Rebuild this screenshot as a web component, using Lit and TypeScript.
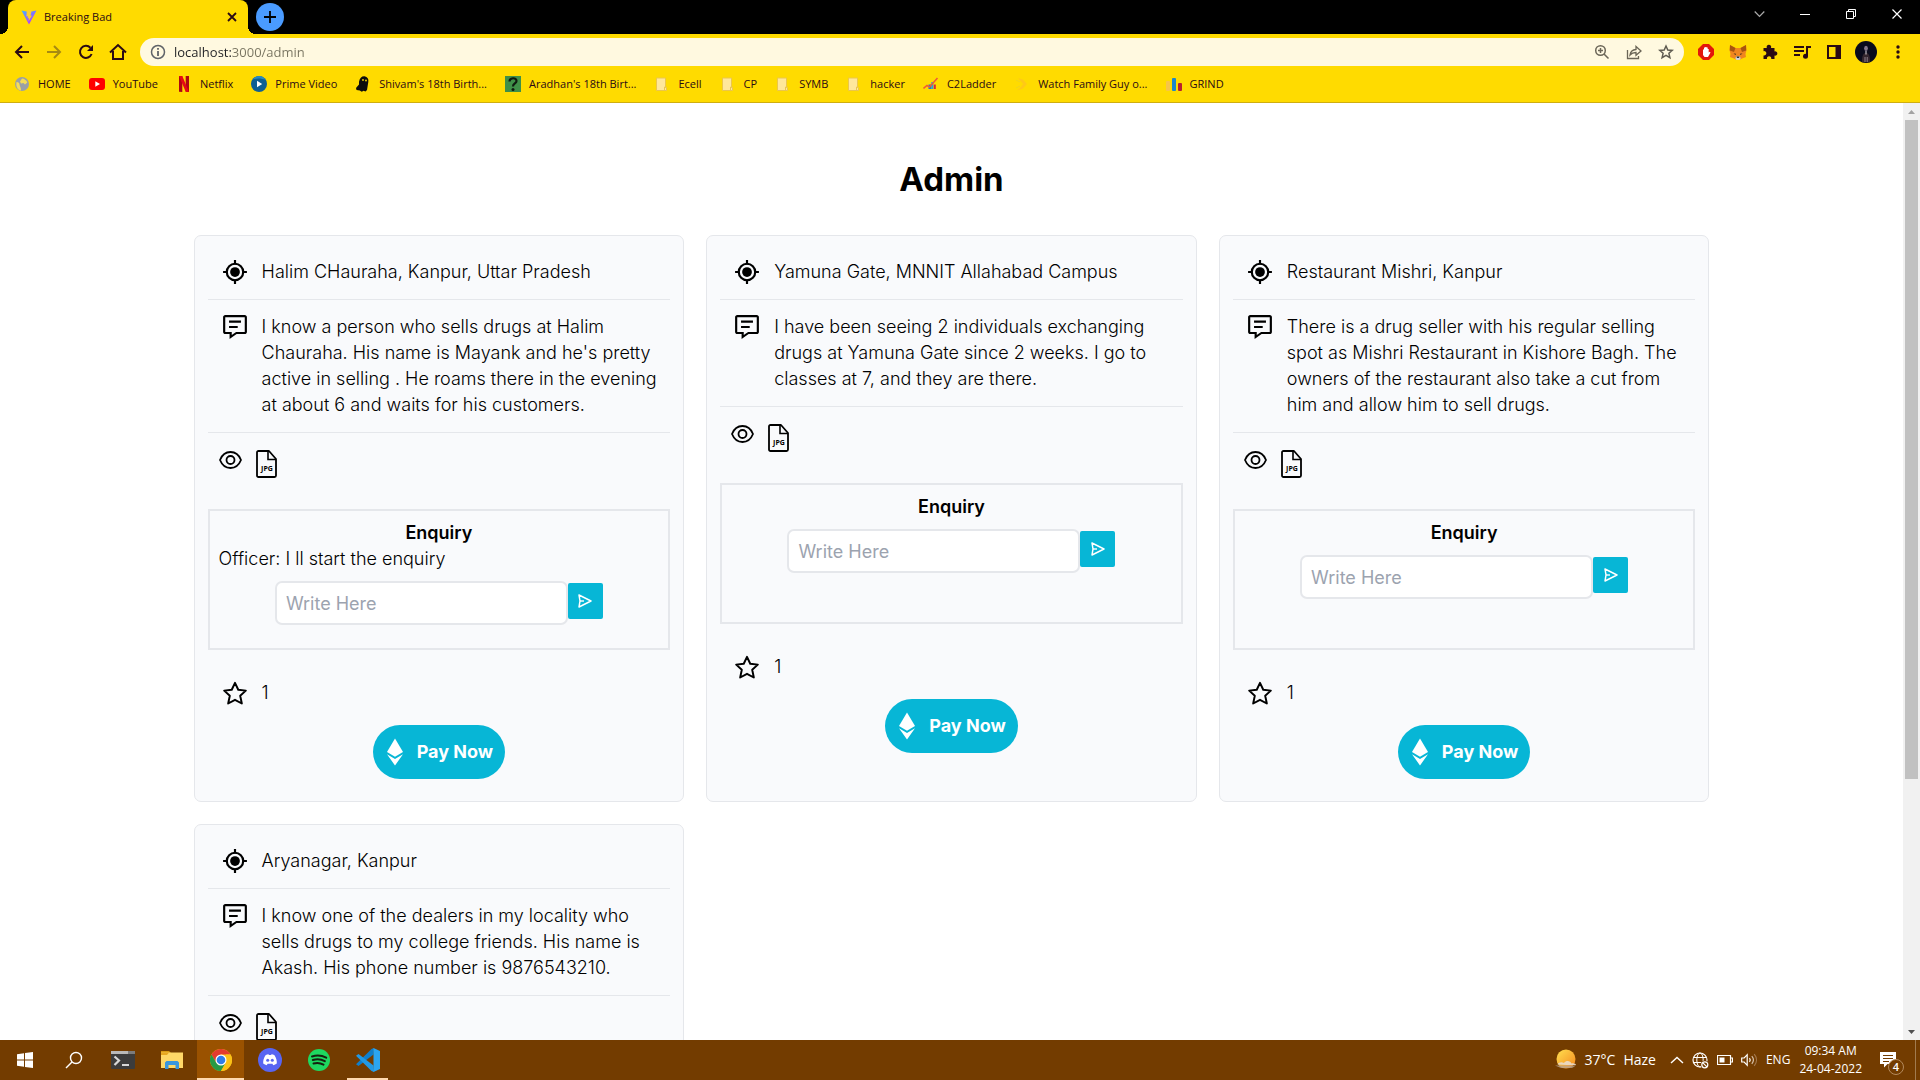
import { LitElement, html, css } from "lit";
import type { TemplateResult } from "lit";
import { customElement, property } from "lit/decorators.js";

interface Report {
  place: string;
  text: string;
  messages: string[];
  stars: number;
}

const REPORTS: Report[] = [
  {
    place: "Halim CHauraha, Kanpur, Uttar Pradesh",
    text: "I know a person who sells drugs at Halim Chauraha. His name is Mayank and he's pretty active in selling . He roams there in the evening at about 6 and waits for his customers.",
    messages: ["Officer: I ll start the enquiry"],
    stars: 1,
  },
  {
    place: "Yamuna Gate, MNNIT Allahabad Campus",
    text: "I have been seeing 2 individuals exchanging drugs at Yamuna Gate since 2 weeks. I go to classes at 7, and they are there.",
    messages: [],
    stars: 1,
  },
  {
    place: "Restaurant Mishri, Kanpur",
    text: "There is a drug seller with his regular selling spot as Mishri Restaurant in Kishore Bagh. The owners of the restaurant also take a cut from him and allow him to sell drugs.",
    messages: [],
    stars: 1,
  },
  {
    place: "Aryanagar, Kanpur",
    text: "I know one of the dealers in my locality who sells drugs to my college friends. His name is Akash. His phone number is 9876543210.",
    messages: [],
    stars: 1,
  },
];

/* ---------- report card icons ---------- */

const locationIcon = html`<svg width="26" height="26" viewBox="0 0 24 24" aria-hidden="true">
  <circle cx="12" cy="12" r="7.6" fill="none" stroke="#000" stroke-width="2" />
  <circle cx="12" cy="12" r="4.5" fill="#000" />
  <path d="M12 1v4M12 19v4M1 12h4M19 12h4" stroke="#000" stroke-width="2" />
</svg>`;

const commentIcon = html`<svg width="26" height="26" viewBox="0 0 24 24" aria-hidden="true">
  <path d="M21 1H3C1.900 1 1 1.900 1 3v13.500c0 1.100.9 2 2 2h4V23l6.500-4.500H21c1.100 0 2-.9 2-2V3c0-1.100-.9-2-2-2zm0 15.500h-8L9 19.300V16.500H3V3h18v13.500z" fill="#000" />
  <path d="M6.500 7h11M6.500 12h8" stroke="#000" stroke-width="2" />
</svg>`;

const starIcon = html`<svg width="26" height="26" viewBox="0 0 24 24" aria-hidden="true">
  <path d="M12 2.600l3 6.400 7 .8-5.200 4.700 1.500 7.200-6.300-3.400-6.300 3.400 1.500-7.200L2 9.800 9 9z" fill="none" stroke="#000" stroke-width="1.800" stroke-linejoin="round" />
</svg>`;

const eyeIcon = html`<svg width="23" height="20" viewBox="0 0 23 20" aria-hidden="true">
  <path d="M1 10C3 5 7 2 11.500 2S20 5 22 10c-2 5-6 8-10.500 8S3 15 1 10z" fill="none" stroke="#000" stroke-width="1.800" stroke-linejoin="round" />
  <circle cx="11.500" cy="10" r="4" fill="none" stroke="#000" stroke-width="1.800" />
</svg>`;

const jpgIcon = html`<svg width="21" height="28" viewBox="0 0 21 28" aria-hidden="true">
  <path d="M2.500 1H13l7 8v16.500c0 .9-.6 1.500-1.500 1.500h-16C1.600 27 1 26.400 1 25.500v-23C1 1.600 1.600 1 2.500 1z" fill="none" stroke="#000" stroke-width="1.800" stroke-linejoin="round" />
  <path d="M12 1v8.500h8" fill="none" stroke="#000" stroke-width="1.600" />
  <text x="11" y="21" text-anchor="middle" class="jpg-text">JPG</text>
</svg>`;

const sendIcon = html`<svg width="14" height="14" viewBox="0 0 14 14" aria-hidden="true">
  <path d="M1 1l12 6L1 13l1-6z" fill="none" stroke="#fff" stroke-width="1.500" stroke-linejoin="round" />
  <path d="M2 7h4" stroke="#fff" stroke-width="1.400" />
</svg>`;

const etherIcon = html`<svg width="18" height="28" viewBox="0 0 18 28" aria-hidden="true">
  <path d="M9 0.500l8 13.500-8 4.800L1 14z" fill="#fff" />
  <path d="M1 16.200l8 4.800 8-4.800L9 27.500z" fill="#fff" />
</svg>`;

/* ---------- browser icons ---------- */

const INK = "#2a0a14";

const backIcon = html`<svg width="16" height="16" viewBox="0 0 16 16"><path d="M15 8H2.500M8 2L2 8l6 6" fill="none" stroke="${INK}" stroke-width="2" /></svg>`;
const forwardIcon = html`<svg width="16" height="16" viewBox="0 0 16 16"><path d="M1 8h12.500M8 2l6 6-6 6" fill="none" stroke="#a68a12" stroke-width="2" /></svg>`;
const reloadIcon = html`<svg width="16" height="16" viewBox="0 0 16 16"><path d="M13.600 10A6 6 0 1 1 12.400 3.800" fill="none" stroke="${INK}" stroke-width="2" /><path d="M15 1v6H9z" fill="${INK}" /></svg>`;
const homeIcon = html`<svg width="18" height="18" viewBox="0 0 18 18"><path d="M1 9.500L9 2l8 7.500M4 8v8h10V8" fill="none" stroke="${INK}" stroke-width="2" /></svg>`;
const infoIcon = html`<svg width="16" height="16" viewBox="0 0 16 16"><circle cx="8" cy="8" r="6.500" fill="none" stroke="#5f6368" stroke-width="1.500" /><path d="M8 7v5M8 4v1.800" stroke="#5f6368" stroke-width="1.800" /></svg>`;
const zoomIcon = html`<svg width="16" height="16" viewBox="0 0 16 16"><circle cx="6.500" cy="6.500" r="4.800" fill="none" stroke="#6b6657" stroke-width="1.500" /><path d="M10 10l4.500 4.500M4 6.500h5M6.500 4v5" stroke="#6b6657" stroke-width="1.500" /></svg>`;
const shareIcon = html`<svg width="16" height="16" viewBox="0 0 16 16"><path d="M1.500 6v8.500h11V12" fill="none" stroke="#6b6657" stroke-width="1.300" /><path d="M4 11c.5-3.500 2.500-5.300 6-5.500V2.500l5 4.500-5 4.300V8.500c-2.500 0-4.500.8-6 2.500z" fill="none" stroke="#6b6657" stroke-width="1.300" /></svg>`;
const bookmarkIcon = html`<svg width="16" height="16" viewBox="0 0 16 16"><path d="M8 2l1.800 4 4.400.4-3.300 2.900 1 4.300L8 11.300l-3.900 2.300 1-4.300L1.800 6.400 6.200 6z" fill="none" stroke="#5f5b50" stroke-width="1.500" /></svg>`;

const blockIcon = html`<svg width="16" height="16" viewBox="0 0 16 16"><path d="M5 0h6l5 5v6l-5 5H5l-5-5V5z" fill="#e3170a" /><path d="M5 9V5.500h1V3.500h1.200V3h1.300v.5h1.200V5h1v3.500l1-.8.8.8L10 13H6.500L5 11z" fill="#fff" /></svg>`;
const foxIcon = html`<svg width="18" height="16" viewBox="0 0 18 16"><path d="M1 1l5.500 3h5L17 1l.5 5-1 4 .5 3-4 1.500-2 1H7l-2-1L1 13l.5-3-1-4z" fill="#f0861e" /><path d="M1 1l5.500 3L5 8 .8 6.500zM17 1l-5.500 3L13 8l4.200-1.500z" fill="#a8550f" /><path d="M4.500 9.500l2.500.3-.5 1.200zM13.500 9.500l-2.500.3.5 1.200z" fill="#33251a" /><path d="M7 12.500h4l.6 2L10.500 16h-3l-1.100-1.500z" fill="#cfd2d6" /><path d="M7.500 12.500h3L10 14H8z" fill="#24313b" /></svg>`;
const puzzleIcon = html`<svg width="16" height="16" viewBox="0 0 16 16"><path d="M1.500 4h3.300a2.300 2.300 0 1 1 4.200 0H12.500v3.400a2.200 2.200 0 1 1 0 4.200V15H9.200a2.200 2.200 0 1 0-4.200 0H1.500v-3.600a2.200 2.200 0 1 0 0-4.200z" fill="${INK}" /></svg>`;
const queueIcon = html`<svg width="17" height="14" viewBox="0 0 17 14"><path d="M0 2h10M0 6h10M0 10h6" stroke="${INK}" stroke-width="1.800" /><path d="M13 11V2h4" fill="none" stroke="${INK}" stroke-width="2" /><circle cx="11.500" cy="11.300" r="2.500" fill="${INK}" /></svg>`;
const panelIcon = html`<svg width="14" height="14" viewBox="0 0 14 14"><path d="M0 0h14v14H0zM2 2v10h6.500V2z" fill="${INK}" fill-rule="evenodd" /></svg>`;
const avatarIcon = html`<svg width="22" height="22" viewBox="0 0 22 22"><circle cx="11" cy="11" r="11" fill="#090b1c" /><path d="M7 21.200c-.2-4 .3-7.500 2.300-9h3.400c2 1.500 2.500 5 2.300 9z" fill="#33262e" /><path d="M9.500 16h1v5h-1zM11.700 16h1v5h-1z" fill="#8d7f88" /><ellipse cx="11" cy="7.300" rx="1.900" ry="2.600" fill="#85788c" /><path d="M10.500 10h1v3.500h-1z" fill="#e4dde2" /></svg>`;
const dotsIcon = html`<svg width="4" height="14" viewBox="0 0 4 14"><circle cx="2" cy="2" r="1.700" fill="${INK}" /><circle cx="2" cy="7" r="1.700" fill="${INK}" /><circle cx="2" cy="12" r="1.700" fill="${INK}" /></svg>`;

const viteIcon = html`<svg width="16" height="16" viewBox="0 0 16 16"><defs><linearGradient id="v" x1="0" y1="0" x2=".6" y2="1"><stop offset="0" stop-color="#41b8ff" /><stop offset="1" stop-color="#bd34fe" /></linearGradient></defs><path d="M.5 1.500L8 15.500l7.500-14L8 3z" fill="url(#v)" /><path d="M10.800.5L5.800 1.500l-.4 6 1.700-.3-.5 2.300 1.400-.4-.6 3.400L11 6.500l-1.500.3z" fill="#ffcf2a" /></svg>`;

/* ---------- bookmarks ---------- */

const folderIcon = html`<svg width="16" height="16" viewBox="0 0 16 16"><path d="M2.500 2h9v9.500h1v3h-10z" fill="#ffe79b" stroke="#ebc64c" /><path d="M10.500 14v-3h2" fill="none" stroke="#ebc64c" /></svg>`;

interface Bookmark {
  label: string;
  icon: TemplateResult;
}

const BOOKMARKS: Bookmark[] = [
  { label: "HOME", icon: html`<svg width="16" height="16" viewBox="0 0 16 16"><circle cx="8" cy="8" r="7" fill="#9aa0a6" /><path d="M2.500 6c2 .3 3 1 3 2.500S7 11 7 14.500C4 14 1.600 11 2.500 6zM8 2.500c2 .2 4.500 1.500 5.300 4L11 8.500 9.500 7 7 7.500 6 5.500z" fill="#f4dc58" /></svg>` },
  { label: "YouTube", icon: html`<svg width="16" height="16" viewBox="0 0 16 16"><rect y="2" width="16" height="12" rx="3" fill="#f00" /><path d="M6.300 5.300v5.400L11 8z" fill="#fff" /></svg>` },
  { label: "Netflix", icon: html`<svg width="16" height="16" viewBox="0 0 16 16"><path d="M3 0h3.300v16L3 15.700zM9.700 0H13v16l-3.300-.3z" fill="#b1060f" /><path d="M3 0h3.300L13 16 9.700 15.700z" fill="#e50914" /></svg>` },
  { label: "Prime Video", icon: html`<svg width="16" height="16" viewBox="0 0 16 16"><circle cx="8" cy="8" r="8" fill="#0f5f93" /><path d="M1.500 3.500A8 8 0 0 1 15 4C10 2 6 2 1.500 3.500z" fill="#2a8cc0" /><path d="M6 4.800v6.400L11.200 8z" fill="#fff" /></svg>` },
  { label: "Shivam's 18th Birth...", icon: html`<svg width="16" height="16" viewBox="0 0 16 16"><path d="M4 6C4.500 2 7 0 9.500.3 12.500.7 13.800 3 13.300 6L12 14l-1.500 1.500-2-.7-1.700.9-2-1.200L1.500 14 1 12l3-3.500z" fill="#0c0c0c" /><circle cx="8" cy="4" r=".9" fill="#ffdb00" /><circle cx="11" cy="4.500" r=".9" fill="#ffdb00" /></svg>` },
  { label: "Aradhan's 18th Birt...", icon: html`<svg width="16" height="16" viewBox="0 0 16 16"><rect width="16" height="16" fill="#3f8f48" /><path d="M4.500 5.500C4.500 1.500 11.500 1 11.500 5c0 2.500-3.500 2.500-3.500 5.500" fill="none" stroke="#0f1a10" stroke-width="2.200" /><circle cx="8" cy="13.500" r="1.500" fill="#0f1a10" /></svg>` },
  { label: "Ecell", icon: folderIcon },
  { label: "CP", icon: folderIcon },
  { label: "SYMB", icon: folderIcon },
  { label: "hacker", icon: folderIcon },
  { label: "C2Ladder", icon: html`<svg width="16" height="16" viewBox="0 0 16 16"><path d="M5.500 8.500h2.800V13H5.500z" fill="#1f7fc4" /><path d="M8.300 6h2v7h-2z" fill="#29a0d8" /><path d="M10.800 8.500h2V13h-2z" fill="#d6293a" /><path d="M.5 12.500L4 9.500l2.500 1.500L14.500 2" fill="none" stroke="#ee5b3a" stroke-width="1.600" /></svg>` },
  { label: "Watch Family Guy o...", icon: html`<svg width="16" height="16" viewBox="0 0 16 16"><path d="M4 2l5 1.500 4 4.500-4 4.500L3 14.500l4-3.500L9 8 6.500 5z" fill="#ffc917" /><path d="M2 4l4 2M2 12l4-2" stroke="#f0d21c" /></svg>` },
  { label: "GRIND", icon: html`<svg width="16" height="16" viewBox="0 0 16 16"><rect y="5" width="4" height="10" rx="1" fill="#f7c548" /><rect x="6" y="2" width="4" height="13" rx="1" fill="#1e88c8" /><rect x="12" y="7" width="4" height="8" rx="1" fill="#b9202f" /></svg>` },
];

/* ---------- taskbar icons ---------- */

interface Task {
  label: string;
  icon: TemplateResult;
  state?: "active" | "open";
}

const TASKS: Task[] = [
  { label: "Start", icon: html`<svg width="16" height="16" viewBox="0 0 16 16"><path d="M0 2.200L7 1.200v6.300H0zM8 1.100L16 0v7.500H8zM0 8.500h7v6.300l-7-1zM8 8.500h8V16l-8-1.100z" fill="#fff" /></svg>` },
  { label: "Search", icon: html`<svg width="18" height="18" viewBox="0 0 18 18"><circle cx="11" cy="7" r="5.500" fill="none" stroke="#fff" stroke-width="1.400" /><path d="M7 11l-6 6" stroke="#fff" stroke-width="1.500" /></svg>` },
  { label: "Terminal", icon: html`<svg width="24" height="18" viewBox="0 0 24 18"><rect width="24" height="18" rx="1" fill="#3c3c3c" /><path d="M0 0h17v3H0z" fill="#b9b9b9" /><path d="M17 0h7v3h-7z" fill="#7c7c7c" /><path d="M3.500 5.500l4.500 4-4.500 4.500" fill="none" stroke="#d8d8d8" stroke-width="2.200" /><path d="M11 14h7" stroke="#fff" stroke-width="1.600" /></svg>` },
  { label: "File Explorer", icon: html`<svg width="22" height="18" viewBox="0 0 22 18"><path d="M0 0h8l2 2H0z" fill="#d99a13" /><path d="M0 1.500h22V17H0z" fill="#ffd868" /><path d="M0 1.500h8L6 4H0z" fill="#e8a720" /><path d="M4 18v-6.500l1.500-1.500h11l1.500 1.500V18h-3.500v-4h-7v4z" fill="#3a96dd" /></svg>` },
  { label: "Chrome", state: "active", icon: html`<svg width="22" height="22" viewBox="0 0 22 22"><circle cx="11" cy="11" r="11" fill="#fbc116" /><path d="M1.470 5.500A11 11 0 0 1 20.530 5.500H11L6.240 13.750z" fill="#e33b2e" /><path d="M1.470 5.500L6.240 13.750 11 16.500 11 22A11 11 0 0 1 1.470 5.500z" fill="#269a45" /><path d="M15.760 13.750L11 22 9 16z" fill="#269a45" /><path d="M20.530 5.500A11 11 0 0 1 11 22l4.760-8.250L16 5.500z" fill="#fbc116" /><circle cx="11" cy="11" r="5.500" fill="#fff" /><circle cx="11" cy="11" r="4.300" fill="#2f7de9" /></svg>` },
  { label: "Discord", icon: html`<svg width="24" height="24" viewBox="0 0 24 24"><circle cx="12" cy="12" r="12" fill="#5865f2" /><path d="M7.500 7.200c1-.6 2-.9 3-1l.4.800h2.200l.4-.8c1 .1 2 .4 3 1 1.700 2.600 2.500 5.300 2.300 8.300-1.100.9-2.300 1.400-3.500 1.700l-.9-1.500h-4.800l-.9 1.500c-1.200-.3-2.400-.8-3.500-1.700-.2-3 .6-5.700 2.300-8.300z" fill="#fff" /><circle cx="9.700" cy="12.200" r="1.500" fill="#5865f2" /><circle cx="14.300" cy="12.200" r="1.500" fill="#5865f2" /></svg>` },
  { label: "Spotify", icon: html`<svg width="22" height="22" viewBox="0 0 22 22"><circle cx="11" cy="11" r="11" fill="#1ed760" /><path d="M4 7.500c5-1.500 10-1 14.200 1.200M4.800 11c4-1.200 8.500-.8 12 1.200M5.500 14.500c3.500-1 7-.6 10 1.100" fill="none" stroke="#15210f" stroke-width="2" stroke-linecap="round" /></svg>` },
  { label: "Visual Studio Code", state: "open", icon: html`<svg width="24" height="24" viewBox="0 0 24 24"><path d="M17.500 6.500L2.500 18 0 16.200 15.500 1 18 0z" fill="#0f7fcb" /><path d="M17.500 17.500L2.500 6 0 7.800 15.500 23l2.500 1z" fill="#2199e4" /><path d="M17.500 0L24 3v18l-6.500 3z" fill="#2ba5f0" /></svg>` },
];

const weatherIcon = html`<svg width="22" height="22" viewBox="1 0 22 22"><defs><linearGradient id="sun" x1="0" y1="0" x2="1" y2="1"><stop offset="0" stop-color="#ffdf4f" /><stop offset="1" stop-color="#f58a1f" /></linearGradient></defs><circle cx="12" cy="10" r="9.500" fill="url(#sun)" /><path d="M3.500 15.500c1-2.500 4.500-3 6.500-1.500 2-3 6.500-2.500 7.500.5 2.500-.5 4.500.5 4.500 1.500h-9.500z" fill="#e9dccb" opacity=".9" /><path d="M1 16.500h21l-4 2.500H7z" fill="#b9a28c" opacity=".8" /></svg>`;
const upIcon = html`<svg width="14" height="8" viewBox="0 0 14 8"><path d="M1 7l6-5.500L13 7" fill="none" stroke="#fff" stroke-width="1.400" /></svg>`;
const globeIcon = html`<svg width="17" height="17" viewBox="0 0 17 17"><circle cx="8" cy="8" r="7" fill="none" stroke="#fff" stroke-width="1.200" /><ellipse cx="8" cy="8" rx="3.200" ry="7" fill="none" stroke="#fff" /><path d="M1.500 5.500h13M1.500 10.500h9" stroke="#fff" /><circle cx="12.800" cy="12.800" r="4.200" fill="#733c00" /><circle cx="12.800" cy="12.800" r="3" fill="none" stroke="#fff" stroke-width="1.200" /><path d="M10.700 10.700l4.200 4.200" stroke="#fff" stroke-width="1.200" /></svg>`;
const batteryIcon = html`<svg width="16" height="10" viewBox="0 0 16 10"><path d="M.5.500h13v9H.5zM14 3h1.500v4H14" fill="none" stroke="#fff" stroke-width="1.200" /><path d="M2.500 2.500h5v5h-5z" fill="#fff" /></svg>`;
const speakerIcon = html`<svg width="17" height="14" viewBox="0 0 17 14"><path d="M.7 5h2.500l3-3.300v10.600L3.200 9H.7z" fill="none" stroke="#fff" stroke-width="1.200" /><path d="M8.500 5.200c.8 1 .8 2.600 0 3.600" fill="none" stroke="#fff" stroke-width="1.200" /><path d="M10.800 3.200c2 2.300 2 5.300 0 7.600" fill="none" stroke="#d6bfa6" stroke-width="1.200" /><path d="M13.200 1.200c3 3.500 3 8.100 0 11.600" fill="none" stroke="#a37a50" stroke-width="1.200" /></svg>`;
const noteIcon = html`<svg width="16" height="16" viewBox="0 0 16 16"><path d="M0 0h16v12H7.500L4 15.500V12H0z" fill="#fff" /><path d="M3 3.500h10M3 6.500h10M3 9.500h6" stroke="#733c00" /></svg>`;

@customElement("report-card")
export class ReportCard extends LitElement {
  @property({ attribute: false }) report!: Report;

  static styles = css`
    :host {
      display: block;
      box-sizing: border-box;
      padding: 9px 13px 22px;
      border: 1px solid #e5e7eb;
      border-radius: 7px;
      background: #f9fafc;
      font-size: 18px;
      line-height: 26px;
      font-weight: 300;
      color: #000;
    }
    * {
      box-sizing: border-box;
    }
    svg {
      display: block;
      flex: none;
    }
    p,
    h2,
    h3 {
      margin: 0;
      font-size: inherit;
    }
    button {
      border: 0;
      padding: 0;
      font: inherit;
      color: #fff;
      background: #07b6d6;
      cursor: pointer;
    }
    .row {
      display: flex;
      align-items: flex-start;
      gap: 14px;
      padding: 14px 0 14px 14px;
    }
    .line {
      border-bottom: 1px solid #e5e7eb;
    }
    .place {
      font-weight: 300;
    }
    .files {
      display: flex;
      align-items: flex-start;
      gap: 14px;
      padding: 17px 11px 31px;
    }
    .files button {
      background: none;
    }
    .jpg-text {
      font: 700 7px "Open Sans", sans-serif;
    }
    .enquiry {
      min-height: 141px;
      padding: 9px;
      border: 2px solid #e5e7eb;
    }
    .enquiry h3 {
      text-align: center;
      font-weight: 600;
    }
    .reply {
      display: flex;
      justify-content: center;
      align-items: flex-start;
      padding-top: 9px;
    }
    .reply input {
      flex: 0 1 293px;
      min-width: 0;
      height: 44px;
      padding: 0 9px;
      border: 2px solid #e5e7eb;
      border-radius: 7px;
      background: #fff;
      font: inherit;
      font-weight: 400;
      outline: none;
    }
    .reply input::placeholder {
      color: #9ca3af;
      opacity: 1;
    }
    .send {
      display: grid;
      place-items: center;
      width: 35px;
      height: 36px;
      margin-top: 2px;
      border-radius: 2px;
    }
    .rating {
      padding: 30px 14px 19px;
    }
    .pay {
      display: flex;
      align-items: center;
      gap: 13px;
      height: 54px;
      margin: 0 auto;
      padding: 0 12px 0 13px;
      border-radius: 27px;
      font-weight: 700;
    }
  `;

  render() {
    const r = this.report;
    return html`
      <div class="row line">${locationIcon}<h2 class="place">${r.place}</h2></div>
      <div class="row line">${commentIcon}<p>${r.text}</p></div>
      <div class="files">
        <button type="button" aria-label="View evidence">${eyeIcon}</button>
        <button type="button" aria-label="Download image">${jpgIcon}</button>
      </div>
      <section class="enquiry">
        <h3>Enquiry</h3>
        ${r.messages.map((m) => html`<p>${m}</p>`)}
        <form class="reply" @submit=${(e: Event) => e.preventDefault()}>
          <input type="text" placeholder="Write Here" aria-label="Enquiry message" />
          <button class="send" type="submit" aria-label="Send">${sendIcon}</button>
        </form>
      </section>
      <div class="row rating">${starIcon}<span>${r.stars}</span></div>
      <button class="pay" type="button">${etherIcon}<span>Pay Now</span></button>
    `;
  }
}

@customElement("app-root")
export class AppRoot extends LitElement {
  static styles = css`
    :host {
      display: flex;
      flex-direction: column;
      height: 100vh;
      overflow: hidden;
      background: #fff;
      font-family: "Inter", "Liberation Sans", sans-serif;
    }
    * {
      box-sizing: border-box;
    }
    svg {
      display: block;
      flex: none;
    }
    button {
      display: grid;
      place-items: center;
      border: 0;
      padding: 0;
      background: none;
      font: inherit;
      color: inherit;
    }
    .chrome,
    .taskbar {
      flex: none;
      font-family: "Open Sans", "Noto Sans", sans-serif;
      font-size: 11px;
      line-height: 16px;
    }

    /* tab strip */
    .tabs {
      display: flex;
      align-items: center;
      height: 34px;
      padding-left: 8px;
      background: #000;
      color: #fff;
    }
    .tab {
      position: relative;
      display: flex;
      align-items: center;
      gap: 7px;
      width: 240px;
      height: 34px;
      padding: 0 10px 0 13px;
      border-radius: 8px 8px 0 0;
      background: #ffdb00;
      color: #2a0a14;
    }
    .tab::before,
    .tab::after {
      content: "";
      position: absolute;
      bottom: 0;
      width: 8px;
      height: 8px;
    }
    .tab::before {
      right: 100%;
      background: radial-gradient(circle at 0 0, #000 8px, #ffdb00 8px);
    }
    .tab::after {
      left: 100%;
      background: radial-gradient(circle at 100% 0, #000 8px, #ffdb00 8px);
    }
    .tab-title {
      flex: 1;
    }
    .new-tab {
      width: 28px;
      height: 28px;
      margin-left: 8px;
      border-radius: 14px;
      background: #4a9bff;
    }
    .window {
      display: flex;
      align-items: center;
      margin-left: auto;
      height: 28px;
      align-self: flex-start;
    }
    .window button {
      width: 46px;
      height: 28px;
    }

    /* toolbar */
    .toolbar {
      display: flex;
      align-items: center;
      height: 36px;
      padding: 0 6px;
      background: #ffdb00;
    }
    .nav {
      display: flex;
      margin-right: 6px;
    }
    .nav button {
      width: 32px;
      height: 28px;
    }
    .address {
      flex: 1;
      display: flex;
      align-items: center;
      gap: 8px;
      height: 28px;
      padding: 0 10px;
      border-radius: 14px;
      background: #fff9e0;
    }
    .address input {
      flex: 1;
      min-width: 0;
      height: 24px;
      border: 0;
      padding: 0;
      outline: none;
      font: inherit;
      font-size: 13px;
      color: #5f6368;
      background: linear-gradient(90deg, #202124 57px, #77735f 57px);
      -webkit-background-clip: text;
      background-clip: text;
      -webkit-text-fill-color: transparent;
    }
    .address-tools {
      display: flex;
      gap: 16px;
    }
    .extensions {
      display: flex;
      align-items: center;
      margin-left: 6px;
    }
    .extensions button {
      width: 32px;
      height: 28px;
    }

    /* bookmarks */
    .bookmarks {
      display: flex;
      align-items: center;
      gap: 18px;
      height: 33px;
      padding: 0 14px 4px;
      border-bottom: 1px solid #cfae10;
      background: #ffdb00;
    }
    .bookmarks a {
      display: flex;
      align-items: center;
      gap: 8px;
      color: #2a0a14;
      text-decoration: none;
      white-space: nowrap;
    }

    /* page */
    .view {
      flex: 1;
      min-height: 0;
      display: flex;
    }
    .page {
      flex: 1;
      min-width: 0;
      overflow-y: auto;
      scrollbar-width: none;
    }
    h1 {
      margin: 0;
      padding: 56px 0 36px;
      text-align: center;
      font-size: 33px;
      line-height: 40px;
      font-weight: 700;
      color: #000;
    }
    .grid {
      display: grid;
      grid-template-columns: repeat(3, minmax(0, 1fr));
      gap: 22px;
      width: calc(100% * 5 / 6);
      margin: 0 auto;
      padding: 0 35px;
    }
    .scrollbar {
      flex: none;
      display: flex;
      flex-direction: column;
      align-items: center;
      width: 17px;
      background: #f1f1f1;
    }
    .scrollbar button {
      width: 17px;
      height: 17px;
    }
    .track {
      flex: 1;
      width: 13px;
    }
    .thumb {
      height: 73%;
      background: #c1c1c1;
    }

    /* taskbar */
    .taskbar {
      display: flex;
      align-items: stretch;
      height: 40px;
      background: #733c00;
      color: #fff;
      font-size: 13px;
    }
    .task {
      width: 49px;
      border-top: 2px solid transparent;
      border-bottom: 2px solid transparent;
    }
    .task.active {
      width: 47px;
      margin: 0 1px;
      background: #9a5200;
      border-bottom-color: #ffd9ae;
    }
    .task.open {
      width: 41px;
      margin: 0 4px;
      border-bottom-color: #ffd9ae;
    }
    .tray {
      display: flex;
      align-items: center;
      margin-left: auto;
    }
    .weather {
      display: flex;
      align-items: center;
      gap: 8px;
      margin-right: 14px;
      font-size: 14px;
    }
    .tray-icons {
      display: flex;
      align-items: center;
      gap: 8px;
      margin-right: 8px;
    }
    .lang {
      font-size: 12px;
    }
    .clock {
      margin: 0 18px 0 9px;
      text-align: center;
      font-size: 12px;
      line-height: 18px;
    }
    .notes {
      position: relative;
      width: 24px;
      height: 40px;
      margin-right: 11px;
      justify-items: start;
    }
    .badge {
      position: absolute;
      left: 8px;
      top: 19px;
      width: 16px;
      height: 16px;
      border: 1px solid #b48a5c;
      border-radius: 8px;
      background: #733c00;
      font-size: 11px;
      line-height: 14px;
      font-weight: 600;
      text-align: center;
    }
    .desktop {
      width: 5px;
      height: 40px;
      border-left: 1px solid #a17b4f;
    }
  `;

  private renderChrome() {
    return html`
      <header class="chrome">
        <div class="tabs">
          <div class="tab">
            ${viteIcon}<span class="tab-title">Breaking Bad</span>
            <button type="button" aria-label="Close tab">
              <svg width="12" height="12" viewBox="0 0 12 12"><path d="M2 2l8 8M10 2l-8 8" stroke="#2a0a14" stroke-width="1.800" /></svg>
            </button>
          </div>
          <button class="new-tab" type="button" aria-label="New tab">
            <svg width="14" height="14" viewBox="0 0 14 14"><path d="M7 1v12M1 7h12" stroke="#000" stroke-width="1.800" /></svg>
          </button>
          <div class="window">
            <button type="button" aria-label="Search tabs"><svg width="11" height="11" viewBox="0 0 11 11"><path d="M.7 2.500l4.800 5 4.800-5" fill="none" stroke="#aaa" stroke-width="1.200" /></svg></button>
            <button type="button" aria-label="Minimize"><svg width="10" height="10" viewBox="0 0 10 10"><path d="M0 5.500h10" stroke="#fff" /></svg></button>
            <button type="button" aria-label="Restore"><svg width="10" height="10" viewBox="0 0 10 10"><path d="M.5 2.500h7v7h-7zM2.500 2.500v-2h7v7h-2" fill="none" stroke="#fff" /></svg></button>
            <button type="button" aria-label="Close"><svg width="10" height="10" viewBox="0 0 10 10"><path d="M.5.500l9 9M9.500.500l-9 9" stroke="#fff" stroke-width="1.200" /></svg></button>
          </div>
        </div>
        <div class="toolbar">
          <nav class="nav">
            <button type="button" aria-label="Back">${backIcon}</button>
            <button type="button" aria-label="Forward">${forwardIcon}</button>
            <button type="button" aria-label="Reload">${reloadIcon}</button>
            <button type="button" aria-label="Home">${homeIcon}</button>
          </nav>
          <div class="address">
            ${infoIcon}
            <input type="text" aria-label="Address" .value=${"localhost:3000/admin"} />
            <div class="address-tools">
              <button type="button" aria-label="Zoom">${zoomIcon}</button>
              <button type="button" aria-label="Share">${shareIcon}</button>
              <button type="button" aria-label="Bookmark this page">${bookmarkIcon}</button>
            </div>
          </div>
          <div class="extensions">
            <button type="button" aria-label="Ad blocker">${blockIcon}</button>
            <button type="button" aria-label="Wallet">${foxIcon}</button>
            <button type="button" aria-label="Extensions">${puzzleIcon}</button>
            <button type="button" aria-label="Media">${queueIcon}</button>
            <button type="button" aria-label="Side panel">${panelIcon}</button>
            <button type="button" aria-label="Profile">${avatarIcon}</button>
            <button type="button" aria-label="Menu">${dotsIcon}</button>
          </div>
        </div>
        <nav class="bookmarks">
          ${BOOKMARKS.map((b) => html`<a href="#">${b.icon}<span>${b.label}</span></a>`)}
        </nav>
      </header>
    `;
  }

  private renderTaskbar() {
    return html`
      <footer class="taskbar">
        ${TASKS.map(
          (t) => html`<button type="button" class="task ${t.state ?? ""}" aria-label=${t.label}>${t.icon}</button>`
        )}
        <div class="tray">
          <div class="weather">${weatherIcon}<span>37°C</span><span>Haze</span></div>
          <div class="tray-icons">${upIcon}${globeIcon}${batteryIcon}${speakerIcon}</div>
          <span class="lang">ENG</span>
          <div class="clock">
            <div>09:34 AM</div>
            <div>24-04-2022</div>
          </div>
          <button class="notes" type="button" aria-label="Notifications">
            ${noteIcon}<span class="badge">4</span>
          </button>
          <div class="desktop"></div>
        </div>
      </footer>
    `;
  }

  render() {
    return html`
      ${this.renderChrome()}
      <div class="view">
        <main class="page">
          <h1>Admin</h1>
          <div class="grid">
            ${REPORTS.map((r) => html`<report-card .report=${r}></report-card>`)}
          </div>
        </main>
        <div class="scrollbar">
          <button type="button" aria-label="Scroll up"><svg width="7" height="4" viewBox="0 0 7 4"><path d="M0 4l3.500-4L7 4z" fill="#a3a3a3" /></svg></button>
          <div class="track"><div class="thumb"></div></div>
          <button type="button" aria-label="Scroll down"><svg width="7" height="4" viewBox="0 0 7 4"><path d="M0 0l3.500 4L7 0z" fill="#505050" /></svg></button>
        </div>
      </div>
      ${this.renderTaskbar()}
    `;
  }
}
